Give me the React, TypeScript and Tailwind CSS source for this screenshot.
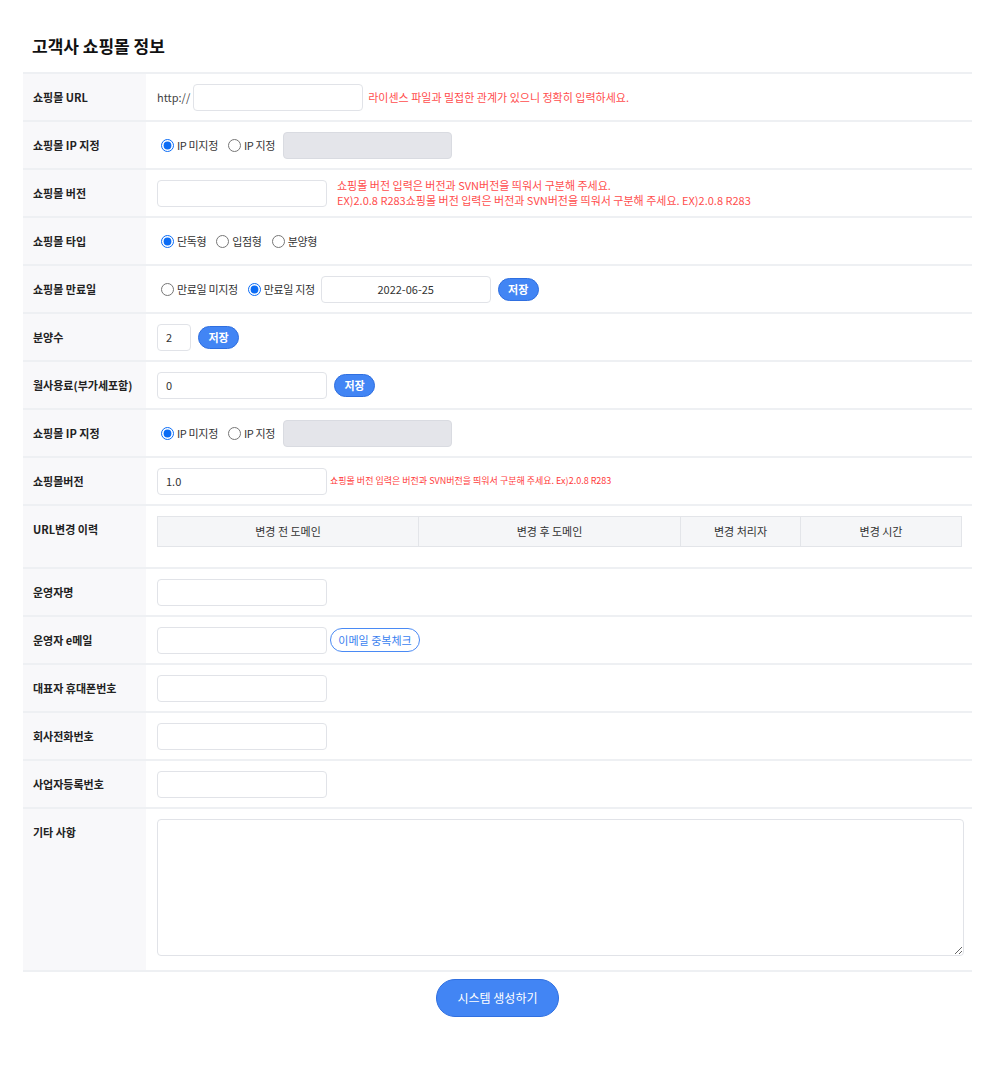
import React from "react"

const font = { fontFamily: '"Noto Sans CJK KR", "Noto Sans", sans-serif' }

function Row({ label, children, tall }: { label: string; children: React.ReactNode; tall?: boolean }) {
  return (
    <div className="flex border-b-2 border-[#eef0f3]">
      <div className="w-[123px] shrink-0 bg-[#f8f8fa] pl-[10px]">
        <div className="flex h-[46px] items-center text-[11px] font-bold text-[#222]">{label}</div>
      </div>
      <div className={tall ? "flex-1 pl-[11px] pr-[8px]" : "flex min-h-[46px] flex-1 items-center pl-[11px] pr-[8px]"}>
        {children}
      </div>
    </div>
  )
}

function TextInput({ value, w = "w-[170px]", center }: { value?: string; w?: string; center?: boolean }) {
  return (
    <input
      defaultValue={value}
      className={`h-[27px] ${w} rounded-[4px] border border-[#e1e3e8] bg-white px-[8px] text-[11px] text-[#333] outline-none ${center ? "text-center" : ""}`}
    />
  )
}

function Radio({ name, label, checked }: { name: string; label: string; checked?: boolean }) {
  return (
    <label className="mr-[6px] flex items-center gap-[3px] text-[11px] tracking-[-0.35px] text-[#333]">
      <input type="radio" name={name} defaultChecked={checked} className="m-0 ml-[4px] h-[13px] w-[13px] accent-[#0b6cf5]" />
      {label}
    </label>
  )
}

function SaveButton() {
  return (
    <button className="ml-[7px] h-[23px] w-[41px] rounded-full border border-[#2f6fe0] bg-[#4285f4] text-[11px] font-bold text-white">
      저장
    </button>
  )
}

export default function App() {
  return (
    <div className="min-h-[1070px] w-[1002px] bg-white" style={font}>
      <div className="px-[23px] pt-[34px]">
        <h1 className="mb-[14px] pl-[9px] text-[17px] font-bold leading-[24px] text-[#111]">고객사 쇼핑몰 정보</h1>
        <div className="w-[949px] border-t-2 border-[#eef0f3]">
          <Row label="쇼핑몰 URL">
            <span className="mr-[3px] text-[11px] text-[#444]">http://</span>
            <TextInput />
            <span className="ml-[5px] text-[11px] text-[#ff4d4d]">라이센스 파일과 밀접한 관계가 있으니 정확히 입력하세요.</span>
          </Row>
          <Row label="쇼핑몰 IP 지정">
            <Radio name="ip1" label="IP 미지정" checked />
            <Radio name="ip1" label="IP 지정" />
            <input disabled className="ml-[2px] h-[27px] w-[169px] rounded-[4px] border border-[#d9dbe1] bg-[#e4e5ea]" />
          </Row>
          <Row label="쇼핑몰 버전">
            <TextInput />
            <div className="ml-[10px] text-[11px] leading-[15px] text-[#ff4d4d]">
              <div>쇼핑몰 버전 입력은 버전과 SVN버전을 띄워서 구분해 주세요.</div>
              <div>EX)2.0.8 R283쇼핑몰 버전 입력은 버전과 SVN버전을 띄워서 구분해 주세요. EX)2.0.8 R283</div>
            </div>
          </Row>
          <Row label="쇼핑몰 타입">
            <Radio name="type" label="단독형" checked />
            <Radio name="type" label="입점형" />
            <Radio name="type" label="분양형" />
          </Row>
          <Row label="쇼핑몰 만료일">
            <Radio name="exp" label="만료일 미지정" />
            <Radio name="exp" label="만료일 지정" checked />
            <TextInput value="2022-06-25" center />
            <SaveButton />
          </Row>
          <Row label="분양수">
            <TextInput value="2" w="w-[34px]" />
            <SaveButton />
          </Row>
          <Row label="월사용료(부가세포함)">
            <TextInput value="0" />
            <SaveButton />
          </Row>
          <Row label="쇼핑몰 IP 지정">
            <Radio name="ip2" label="IP 미지정" checked />
            <Radio name="ip2" label="IP 지정" />
            <input disabled className="ml-[2px] h-[27px] w-[169px] rounded-[4px] border border-[#d9dbe1] bg-[#e4e5ea]" />
          </Row>
          <Row label="쇼핑몰버전">
            <TextInput value="1.0" />
            <span className="ml-[3px] text-[9px] text-[#ff3b3b]">쇼핑몰 버전 입력은 버전과 SVN버전을 띄워서 구분해 주세요. Ex)2.0.8 R283</span>
          </Row>
          <Row label="URL변경 이력" tall>
            <div className="pb-[20px] pt-[10px] pr-[2px]">
              <div className="grid h-[31px] grid-cols-[261px_262px_120px_1fr] border border-[#e3e5e9] bg-[#f5f6f8] text-[11px] text-[#333]">
                <div className="flex items-center justify-center border-r border-[#e3e5e9]">변경 전 도메인</div>
                <div className="flex items-center justify-center border-r border-[#e3e5e9]">변경 후 도메인</div>
                <div className="flex items-center justify-center border-r border-[#e3e5e9]">변경 처리자</div>
                <div className="flex items-center justify-center">변경 시간</div>
              </div>
            </div>
          </Row>
          <Row label="운영자명">
            <TextInput />
          </Row>
          <Row label="운영자 e메일">
            <TextInput />
            <button className="ml-[3px] h-[24px] w-[90px] rounded-full border border-[#4a8af4] bg-white text-[11px] text-[#3a7ff0]">
              이메일 중복체크
            </button>
          </Row>
          <Row label="대표자 휴대폰번호">
            <TextInput />
          </Row>
          <Row label="회사전화번호">
            <TextInput />
          </Row>
          <Row label="사업자등록번호">
            <TextInput />
          </Row>
          <Row label="기타 사항" tall>
            <div className="pb-[14px] pt-[10px]">
              <textarea className="block h-[137px] w-[807px] rounded-[4px] border border-[#e1e3e8] bg-white p-[8px] text-[11px] outline-none" />
            </div>
          </Row>
        </div>
        <div className="flex w-[949px] justify-center pt-[7px]">
          <button className="h-[38px] w-[123px] rounded-full border border-[#2f6fe0] bg-[#4285f4] text-[12px] text-white">
            시스템 생성하기
          </button>
        </div>
      </div>
    </div>
  )
}
